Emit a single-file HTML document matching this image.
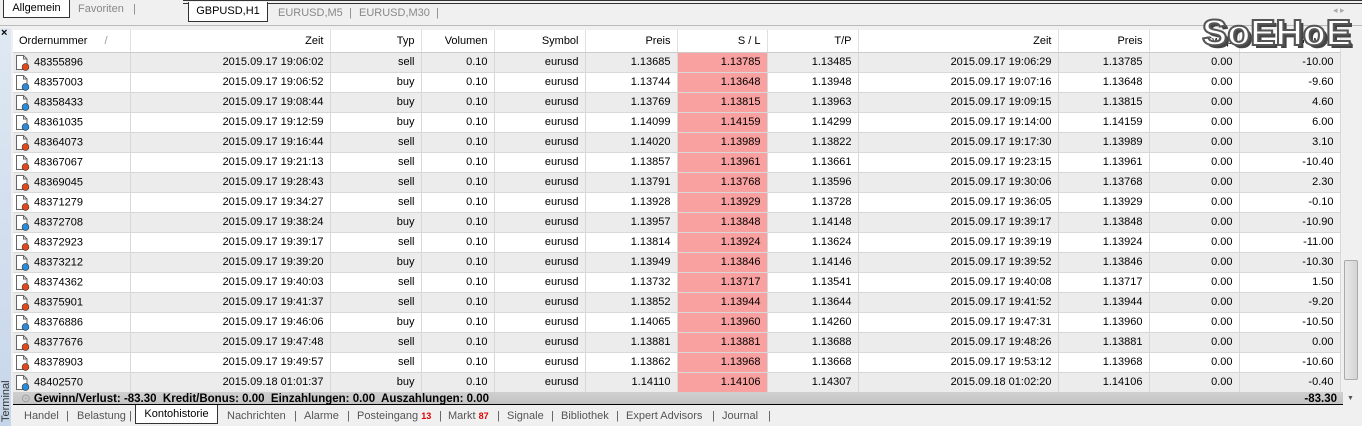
<!DOCTYPE html><html><head><meta charset="utf-8"><style>
*{margin:0;padding:0;box-sizing:border-box}
body{width:1362px;height:426px;overflow:hidden;background:#f0f0f0;font-family:"Liberation Sans",sans-serif;font-size:11px;color:#000;position:relative}
.a{position:absolute}
.tab{position:absolute;top:0;height:18px;line-height:18px;color:#888;font-size:11px}
table{border-collapse:collapse;table-layout:fixed;position:absolute;left:13px;top:30px}
td{height:20px;border-right:1px solid #d8d8d8;border-bottom:1px solid #d8d8d8;text-align:right;padding-right:6px;white-space:nowrap;overflow:hidden;font-size:11px}
th{height:22px;font-weight:normal;text-align:right;padding-right:6px;background:#fff;border-right:1px solid #e0e0e0;border-bottom:1px solid #ccc;font-size:11px}
tr.g td{background:#ececec}
tr.w td{background:#fff}
td.sl{background:#f9a0a0!important}
td.o{text-align:left;padding-left:2px;position:relative}
.ic{display:inline-block;width:16px;height:17px;vertical-align:middle;margin-right:3px}
.bt{position:absolute;top:410px;color:#555;font-size:11px}
</style></head><body>
<div class="a" style="left:0;top:0;width:1362px;height:26px;background:#f0f0f0;border-bottom:1px solid #bbb"></div>
<div class="a" style="left:3px;top:0;width:67px;height:18px;border:1px solid #333;border-top:none;background:#fff;text-align:center;line-height:16px">Allgemein</div>
<div class="tab" style="left:78px">Favoriten</div><div class="tab" style="left:133px">|</div>
<div class="a" style="left:183px;top:0;width:1179px;height:4px;border-top:1px solid #333;border-bottom:1px solid #333"></div>
<div class="a" style="left:188px;top:2px;width:80px;height:20px;border:1px solid #333;border-top:none;background:#fff;text-align:center;line-height:19px">GBPUSD,H1</div>
<div class="tab" style="left:278px;top:4px">EURUSD,M5</div><div class="tab" style="left:349px;top:4px">|</div>
<div class="tab" style="left:359px;top:4px">EURUSD,M30</div><div class="tab" style="left:436px;top:4px">|</div>
<div class="a" style="left:1333px;top:5px;color:#aaa;font-size:9px">◂ ▸</div>
<div class="a" style="left:0;top:28px;width:11px;height:398px;background:linear-gradient(#dfe8f3,#c6d6ea)"></div>
<div class="a" style="left:1px;top:27px;font-weight:bold;font-size:11px">×</div>
<div class="a" style="left:-18px;top:392px;transform:rotate(-90deg);font-size:11px;color:#333;width:48px">Terminal</div>
<table>
<colgroup><col width="117"><col width="200"><col width="91"><col width="73"><col width="91"><col width="92"><col width="90"><col width="91"><col width="200"><col width="91"><col width="90"><col width="101"></colgroup>
<tr><th style="text-align:left;padding-left:6px">Ordernummer <span style="color:#999;margin-left:14px">/</span></th><th>Zeit</th><th>Typ</th><th>Volumen</th><th>Symbol</th><th>Preis</th><th>S / L</th><th>T/P</th><th>Zeit</th><th>Preis</th><th>Swap</th><th>Gewinn</th></tr>
<tbody id="tb"></tbody>
</table>
<div class="a" style="left:1343px;top:30px;width:19px;height:375px;background:#f0f0f0"></div>
<div class="a" style="left:1344px;top:260px;width:14px;height:120px;background:linear-gradient(90deg,#e8e8e8,#d4d4d4);border:1px solid #aaa;border-radius:2px"></div>
<div class="a" style="left:1347px;top:395px;font-size:7px;color:#555">▼</div>
<div class="a" style="left:1347px;top:40px;font-size:7px;color:#555">▲</div>
<div class="a" style="left:13px;top:392px;width:1330px;height:13px;background:linear-gradient(#d0d0d0,#c4c4c4);border-bottom:1px solid #000;font-weight:bold;line-height:14px;padding-left:8px;overflow:hidden;font-size:11.5px"><span style="color:#999;font-weight:normal">⊙</span> Gewinn/Verlust: -83.30&nbsp; Kredit/Bonus: 0.00&nbsp; Einzahlungen: 0.00&nbsp; Auszahlungen: 0.00<span style="position:absolute;right:6px">-83.30</span></div>
<div class="bt" style="left:24px">Handel</div><div class="bt" style="left:66px">|</div>
<div class="bt" style="left:77px">Belastung</div><div class="bt" style="left:129px">|</div>
<div class="a" style="left:135px;top:405px;width:83px;height:19px;background:#fff;border:1px solid #333;border-top:none;text-align:center;line-height:18px">Kontohistorie</div>
<div class="bt" style="left:227px">Nachrichten</div><div class="bt" style="left:294px">|</div>
<div class="bt" style="left:304px">Alarme</div><div class="bt" style="left:347px">|</div>
<div class="bt" style="left:357px">Posteingang <span style="color:#d00;font-size:9px;font-weight:bold">13</span></div><div class="bt" style="left:439px">|</div>
<div class="bt" style="left:448px">Markt <span style="color:#d00;font-size:9px;font-weight:bold">87</span></div><div class="bt" style="left:497px">|</div>
<div class="bt" style="left:507px">Signale</div><div class="bt" style="left:551px">|</div>
<div class="bt" style="left:561px">Bibliothek</div><div class="bt" style="left:616px">|</div>
<div class="bt" style="left:626px">Expert Advisors</div><div class="bt" style="left:712px">|</div>
<div class="bt" style="left:722px">Journal</div><div class="bt" style="left:768px">|</div>
<div class="a" style="left:1202px;top:12px;font-family:'Liberation Sans',sans-serif;font-weight:bold;font-size:36px;color:#fff;-webkit-text-stroke:2px #555;text-shadow:3px 3px 0 #444;transform:scaleX(1.05);transform-origin:left">SoEHoE</div>
<script>
var d=[["48355896","2015.09.17 19:06:02","sell","1.13685","1.13785","1.13485","2015.09.17 19:06:29","1.13785","-10.00"],
["48357003","2015.09.17 19:06:52","buy","1.13744","1.13648","1.13948","2015.09.17 19:07:16","1.13648","-9.60"],
["48358433","2015.09.17 19:08:44","buy","1.13769","1.13815","1.13963","2015.09.17 19:09:15","1.13815","4.60"],
["48361035","2015.09.17 19:12:59","buy","1.14099","1.14159","1.14299","2015.09.17 19:14:00","1.14159","6.00"],
["48364073","2015.09.17 19:16:44","sell","1.14020","1.13989","1.13822","2015.09.17 19:17:30","1.13989","3.10"],
["48367067","2015.09.17 19:21:13","sell","1.13857","1.13961","1.13661","2015.09.17 19:23:15","1.13961","-10.40"],
["48369045","2015.09.17 19:28:43","sell","1.13791","1.13768","1.13596","2015.09.17 19:30:06","1.13768","2.30"],
["48371279","2015.09.17 19:34:27","sell","1.13928","1.13929","1.13728","2015.09.17 19:36:05","1.13929","-0.10"],
["48372708","2015.09.17 19:38:24","buy","1.13957","1.13848","1.14148","2015.09.17 19:39:17","1.13848","-10.90"],
["48372923","2015.09.17 19:39:17","sell","1.13814","1.13924","1.13624","2015.09.17 19:39:19","1.13924","-11.00"],
["48373212","2015.09.17 19:39:20","buy","1.13949","1.13846","1.14146","2015.09.17 19:39:52","1.13846","-10.30"],
["48374362","2015.09.17 19:40:03","sell","1.13732","1.13717","1.13541","2015.09.17 19:40:08","1.13717","1.50"],
["48375901","2015.09.17 19:41:37","sell","1.13852","1.13944","1.13644","2015.09.17 19:41:52","1.13944","-9.20"],
["48376886","2015.09.17 19:46:06","buy","1.14065","1.13960","1.14260","2015.09.17 19:47:31","1.13960","-10.50"],
["48377676","2015.09.17 19:47:48","sell","1.13881","1.13881","1.13688","2015.09.17 19:48:26","1.13881","0.00"],
["48378903","2015.09.17 19:49:57","sell","1.13862","1.13968","1.13668","2015.09.17 19:53:12","1.13968","-10.60"],
["48402570","2015.09.18 01:01:37","buy","1.14110","1.14106","1.14307","2015.09.18 01:02:20","1.14106","-0.40"]];
var h="";d.forEach(function(r,i){var c=r[2]=="sell"?"#e04a1a":"#2a8ad8";
var ic='<svg class="ic" viewBox="0 0 16 17"><path d="M1.5 1.5h7l3.5 3.5v10.5h-10.5z" fill="#fff" stroke="#666"/><path d="M8.5 1.5v3.5h3.5" fill="none" stroke="#666"/><circle cx="10.5" cy="13" r="3.4" fill="'+c+'" stroke="#333" stroke-width=".6"/></svg>';
h+='<tr class="'+(i%2?"w":"g")+'"><td class="o">'+ic+r[0]+'</td><td>'+r[1]+'</td><td>'+r[2]+'</td><td>0.10</td><td>eurusd</td><td>'+r[3]+'</td><td class="sl">'+r[4]+'</td><td>'+r[5]+'</td><td>'+r[6]+'</td><td>'+r[7]+'</td><td>0.00</td><td>'+r[8]+'</td></tr>';});
document.getElementById("tb").innerHTML=h;
</script>
</body></html>
